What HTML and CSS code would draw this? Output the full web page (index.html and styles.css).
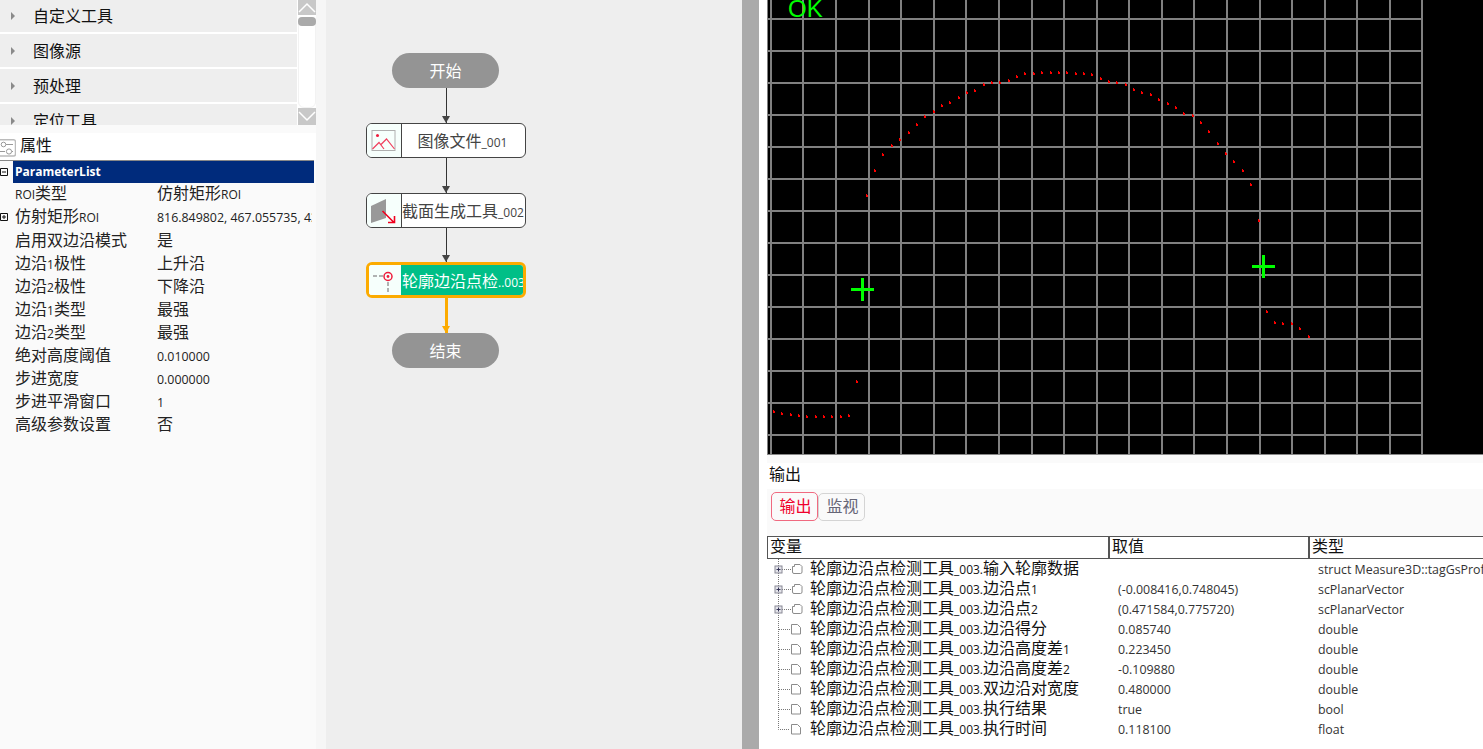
FILE: index.html
```html
<!DOCTYPE html>
<html lang="zh">
<head>
<meta charset="utf-8">
<title>轮廓边沿点检测工具</title>
<link rel="stylesheet" href="styles.css">
</head>
<body>
<svg class="defs" width="0" height="0" aria-hidden="true">
  <symbol id="t-branch" viewBox="0 0 43 20">
    <path d="M11.5 0V7M11.5 14V20M15 10.5H24" class="dots"/>
    <rect x="8" y="7" width="7" height="7" class="box"/>
    <path d="M9.5 10.5h4M11.5 8.5v4" class="plus"/>
    <path d="M25.500 7.500h2v-2h5.500l2 2v5.500q0 1.500-1.500 1.500h-6.500q-1.500 0-1.500-1.500z" class="ico"/>
  </symbol>
  <symbol id="t-leaf" viewBox="0 0 43 20">
    <path d="M11.500 0V20M12 10.500H23" class="dots"/>
    <path d="M24.500 5.500h6l3 3v6.500h-9z" class="ico"/>
  </symbol>
  <symbol id="t-last" viewBox="0 0 43 20">
    <path d="M11.500 0V10.500H23" class="dots"/>
    <path d="M24.500 5.500h6l3 3v6.500h-9z" class="ico"/>
  </symbol>
</svg>

<div class="app">
  <aside class="left">
    <div class="toolbox">
      <ul class="groups">
        <li class="group"><i class="caret"></i>自定义工具</li>
        <li class="group"><i class="caret"></i>图像源</li>
        <li class="group"><i class="caret"></i>预处理</li>
        <li class="group"><i class="caret"></i>定位工具</li>
      </ul>
      <div class="scrollbar">
        <div class="sb-btn"><svg width="18" height="15" viewBox="0 0 18 15"><path d="M1 12 9 4l8 8" class="chev"/></svg></div>
        <div class="sb-track"><div class="sb-thumb"></div></div>
        <div class="sb-btn"><svg width="18" height="17" viewBox="0 0 18 17"><path d="M1 4l8 8 8-8" class="chev"/></svg></div>
      </div>
    </div>
    <div class="strip"></div>
    <div class="prop-title">
      <svg class="prop-ico" width="16" height="18" viewBox="0 0 16 18">
        <path d="M-3 .8H13.500a2 2 0 0 1 2 2V15a2 2 0 0 1-2 2H-3" class="pi-box"/>
        <circle cx="3.500" cy="5.500" r="2.300" class="pi-l"/><path d="M6 5.500h7M0 12.500h5" class="pi-l"/>
        <circle cx="9" cy="12.500" r="2.600" class="pi-l"/><path d="M12 12.500h1" class="pi-l"/>
      </svg>
      <span class="prop-name">属性</span>
    </div>
    <div class="props">
      <div class="prop-head">
        <svg class="tog" width="8" height="8" viewBox="0 0 8 8"><path d="M.5.500h7v7h-7zM2 4h4"/></svg>
        <div class="prop-bar">ParameterList</div>
      </div>
      <div class="prop first"><span class="k"><span class="l">ROI</span>类型</span><span class="v">仿射矩形<span class="l">ROI</span></span></div>
      <div class="prop first"><svg class="tog" width="8" height="8" viewBox="0 0 8 8"><path d="M.5.500h7v7h-7zM2 4h4M4 2v4"/></svg><span class="k">仿射矩形<span class="l">ROI</span></span><span class="v"><span class="m">816.849802, 467.055735, 432.000000</span></span></div>
      <div class="prop"><span class="k">启用双边沿模式</span><span class="v">是</span></div>
      <div class="prop"><span class="k">边沿<span class="l">1</span>极性</span><span class="v">上升沿</span></div>
      <div class="prop"><span class="k">边沿<span class="l">2</span>极性</span><span class="v">下降沿</span></div>
      <div class="prop"><span class="k">边沿<span class="l">1</span>类型</span><span class="v">最强</span></div>
      <div class="prop"><span class="k">边沿<span class="l">2</span>类型</span><span class="v">最强</span></div>
      <div class="prop"><span class="k">绝对高度阈值</span><span class="v"><span class="m">0.010000</span></span></div>
      <div class="prop"><span class="k">步进宽度</span><span class="v"><span class="m">0.000000</span></span></div>
      <div class="prop"><span class="k">步进平滑窗口</span><span class="v"><span class="m">1</span></span></div>
      <div class="prop"><span class="k">高级参数设置</span><span class="v">否</span></div>
    </div>
  </aside>
  <div class="gutter"></div>

  <main class="flow">
    <div class="flow-col">
      <div class="pill">开始</div>
      <div class="conn"></div>
      <div class="node">
        <div class="node-ico">
          <svg width="34" height="33" viewBox="0 0 34 33">
            <rect x="5" y="6.500" width="23" height="20" fill="none" stroke="#b0b0b0"/>
            <circle cx="10.500" cy="11.500" r="1.500" fill="#ee1c3c"/>
            <path d="M5.500 25 12 18.500l5 6.500M13.500 21l6-6 8 10" fill="none" stroke="#f0405e" stroke-width="1.200"/>
          </svg>
        </div>
        <div class="node-txt">图像文件<span class="l">_001</span></div>
      </div>
      <div class="conn"></div>
      <div class="node">
        <div class="node-ico">
          <svg width="34" height="33" viewBox="0 0 34 33">
            <path d="M4 12 19 5v19L4 29z" fill="#999"/>
            <path d="M15.500 17 27 28.500M21 28.500h6.500V22" fill="none" stroke="#f0001e" stroke-width="1.600"/>
          </svg>
        </div>
        <div class="node-txt">截面生成工具<span class="l">_002</span></div>
      </div>
      <div class="conn short"></div>
      <div class="node active">
        <div class="node-ico">
          <svg width="32" height="30" viewBox="0 0 32 30">
            <path d="M4 11h10M19 17v11" fill="none" stroke="#999" stroke-width="1.500" stroke-dasharray="4 2"/>
            <circle cx="19" cy="11.500" r="4" fill="none" stroke="#ee1c3c" stroke-width="1.500"/>
            <circle cx="19" cy="11.500" r="1.400" fill="#ee1c3c"/>
          </svg>
        </div>
        <div class="node-txt">轮廓边沿点检<span class="l">..003</span></div>
      </div>
      <div class="conn hot"></div>
      <div class="pill">结束</div>
    </div>
  </main>
  <div class="splitter"></div>

  <section class="right">
    <div class="view">
      <svg class="canvas" width="716" height="454" viewBox="767 0 716 454">
        <path class="grid" d="M771 0V454M803 0V454M836 0V454M869 0V454M901 0V454M934 0V454M966 0V454M999 0V454M1032 0V454M1064 0V454M1097 0V454M1129 0V454M1162 0V454M1194 0V454M1227 0V454M1260 0V454M1292 0V454M1325 0V454M1357 0V454M1390 0V454M1422 0V454M768 19H1423M768 51H1423M768 83H1423M768 115H1423M768 147H1423M768 179H1423M768 211H1423M768 243H1423M768 275H1423M768 307H1423M768 339H1423M768 371H1423M768 403H1423M768 435H1423"/>
        <path class="edge" d="M767.500 0V454"/>
        <path class="pts" d="M866 194h1v1h1v2h-2zM874 169h1v1h1v2h-2zM882 153h1v1h1v2h-2zM891 144h1v1h1v2h-2zM899 138h1v1h1v2h-2zM908 131h1v1h1v2h-2zM916 123h1v1h1v2h-2zM924 115h1v1h1v2h-2zM933 110h1v1h1v2h-2zM941 104h1v1h1v2h-2zM949 101h1v1h1v2h-2zM958 96h1v1h1v2h-2zM966 91h1v1h1v2h-2zM974 89h1v1h1v2h-2zM983 83h1v1h1v2h-2zM991 81h1v1h1v2h-2zM999 81h1v1h1v2h-2zM1008 79h1v1h1v2h-2zM1016 75h1v1h1v2h-2zM1024 72h1v1h1v2h-2zM1033 72h1v1h1v2h-2zM1041 71h1v1h1v2h-2zM1050 71h1v1h1v2h-2zM1058 71h1v1h1v2h-2zM1066 71h1v1h1v2h-2zM1075 72h1v1h1v2h-2zM1083 72h1v1h1v2h-2zM1091 73h1v1h1v2h-2zM1100 77h1v1h1v2h-2zM1108 80h1v1h1v2h-2zM1116 81h1v1h1v2h-2zM1125 83h1v1h1v2h-2zM1133 88h1v1h1v2h-2zM1141 91h1v1h1v2h-2zM1150 93h1v1h1v2h-2zM1158 98h1v1h1v2h-2zM1167 102h1v1h1v2h-2zM1175 106h1v1h1v2h-2zM1183 112h1v1h1v2h-2zM1192 114h1v1h1v2h-2zM1200 121h1v1h1v2h-2zM1208 130h1v1h1v2h-2zM1217 142h1v1h1v2h-2zM1225 152h1v1h1v2h-2zM1233 160h1v1h1v2h-2zM1242 169h1v1h1v2h-2zM1250 183h1v1h1v2h-2zM1258 219h1v1h1v2h-2zM1266 310h1v1h1v2h-2zM1274 321h1v1h1v2h-2zM1282 322h1v1h1v2h-2zM1291 322h1v1h1v2h-2zM1299 327h1v1h1v2h-2zM1308 335h1v1h1v2h-2zM773 410h1v1h1v2h-2zM781 412h1v1h1v2h-2zM790 413h1v1h1v2h-2zM798 414h1v1h1v2h-2zM806 415h1v1h1v2h-2zM815 415h1v1h1v2h-2zM823 415h1v1h1v2h-2zM831 415h1v1h1v2h-2zM840 415h1v1h1v2h-2zM848 414h1v1h1v2h-2zM856 380h1v1h1v2h-2z"/>
        <path class="cross" d="M851 289.500H874M862.500 278V301M1252 266.500H1275M1263.500 255V278"/>
        <text class="ok" x="788" y="17">OK</text>
      </svg>
    </div>
    <div class="strip"></div>
    <div class="out-title">输出</div>
    <div class="tabs">
      <button class="tab on" type="button">输出</button>
      <button class="tab" type="button">监视</button>
    </div>
    <div class="thead">
      <div class="th c1">变量</div>
      <div class="th c2">取值</div>
      <div class="th c3">类型</div>
    </div>
    <div class="tbody">
      <div class="tr"><svg class="tw"><use href="#t-branch"/></svg><div class="td n">轮廓边沿点检测工具<span class="l">_003.</span>输入轮廓数据</div><div class="td w"></div><div class="td t">struct Measure3D::tagGsProfileData</div></div>
      <div class="tr"><svg class="tw"><use href="#t-branch"/></svg><div class="td n">轮廓边沿点检测工具<span class="l">_003.</span>边沿点<span class="l">1</span></div><div class="td w">(-0.008416,0.748045)</div><div class="td t">scPlanarVector</div></div>
      <div class="tr"><svg class="tw"><use href="#t-branch"/></svg><div class="td n">轮廓边沿点检测工具<span class="l">_003.</span>边沿点<span class="l">2</span></div><div class="td w">(0.471584,0.775720)</div><div class="td t">scPlanarVector</div></div>
      <div class="tr"><svg class="tw"><use href="#t-leaf"/></svg><div class="td n">轮廓边沿点检测工具<span class="l">_003.</span>边沿得分</div><div class="td w">0.085740</div><div class="td t">double</div></div>
      <div class="tr"><svg class="tw"><use href="#t-leaf"/></svg><div class="td n">轮廓边沿点检测工具<span class="l">_003.</span>边沿高度差<span class="l">1</span></div><div class="td w">0.223450</div><div class="td t">double</div></div>
      <div class="tr"><svg class="tw"><use href="#t-leaf"/></svg><div class="td n">轮廓边沿点检测工具<span class="l">_003.</span>边沿高度差<span class="l">2</span></div><div class="td w">-0.109880</div><div class="td t">double</div></div>
      <div class="tr"><svg class="tw"><use href="#t-leaf"/></svg><div class="td n">轮廓边沿点检测工具<span class="l">_003.</span>双边沿对宽度</div><div class="td w">0.480000</div><div class="td t">double</div></div>
      <div class="tr"><svg class="tw"><use href="#t-leaf"/></svg><div class="td n">轮廓边沿点检测工具<span class="l">_003.</span>执行结果</div><div class="td w">true</div><div class="td t">bool</div></div>
      <div class="tr"><svg class="tw"><use href="#t-last"/></svg><div class="td n">轮廓边沿点检测工具<span class="l">_003.</span>执行时间</div><div class="td w">0.118100</div><div class="td t">float</div></div>
    </div>
  </section>
</div>
</body>
</html>
```

FILE: styles.css
```css
* { box-sizing: border-box; }
html, body { margin: 0; height: 100%; overflow: hidden; background: #fff; }
body { font: 16px/20px "Open Sans", "Noto Sans CJK SC", sans-serif; color: #1a1a1a; }
.defs { position: absolute; }
.l { font-size: 12px; }
.m { font-size: 12.4px; }

.app { display: flex; height: 749px; width: 1483px; }

/* left column */
.left { width: 316px; flex: none; display: flex; flex-direction: column; background: #fafafa; }
.toolbox { height: 125px; display: flex; overflow: hidden; background: #fff; }
.groups { list-style: none; margin: -1px 0 0; padding: 0; width: 297px; flex: none; }
.group { height: 33px; margin-bottom: 2px; background: #eee; display: flex; align-items: center; padding: 1px 0 0 11px; color: #111; flex: none; }
.caret { width: 0; height: 0; margin-top: -1px; border-left: 4px solid #8a8a8a; border-top: 4px solid transparent; border-bottom: 4px solid transparent; margin-right: 18px; }
.scrollbar { width: 18px; margin-left: 1px; display: flex; flex-direction: column; }
.sb-btn { background: #c8c8c8; display: flex; }
.sb-track { flex: 1; margin: 2px 0 0; position: relative; border: 1px solid #f2f2f2; border-radius: 6px; }
.sb-thumb { height: 9px; margin: -1px; background: #aaa; border-radius: 4px; }
.chev { fill: none; stroke: #fff; stroke-width: 1.500; }
.strip { height: 8px; background: #fafafa; flex: none; }
.prop-title { height: 27px; background: #fff; display: flex; align-items: center; gap: 4px; flex: none; color: #111; }
.prop-name { margin-top: -4px; }
.prop-ico { flex: none; overflow: hidden; margin-top: 3px; }
.pi-box { fill: none; stroke: #bbb; stroke-width: 1.500; }
.pi-l { fill: none; stroke: #999; stroke-width: 1; }
.props { border-top: 1px solid #888; flex: 1; width: 314px; overflow: hidden; }
.prop-head { height: 22px; display: flex; align-items: center; }
.prop-bar { margin-left: 5px; flex: 1; height: 22px; background: #002b7c; color: #fff; font-size: 12px; font-weight: 700; line-height: 21px; padding-left: 2px; }
.tog { flex: none; display: block; fill: none; stroke: #111; stroke-width: 1; }
.prop { height: 23px; line-height: 23px; display: flex; align-items: flex-start; white-space: nowrap; color: #222; padding-left: 15px; position: relative; }
.prop.first { line-height: 21px; }
.prop .tog { position: absolute; left: 0; top: 7px; }
.k { width: 142px; flex: none; }
.v { width: 155px; flex: none; overflow: hidden; }
.gutter { width: 10px; flex: none; background: #f6f6f6; }

/* flow canvas */
.flow { width: 416px; flex: none; background: #eee; padding: 53px 0 0 40px; }
.flow-col { width: 160px; display: flex; flex-direction: column; align-items: center; }
.pill { width: 107px; height: 35px; margin-right: 1px; border-radius: 18px; background: #949494; color: #fff; text-align: center; line-height: 37px; }
.node { width: 160px; height: 35px; border: 1px solid #444; border-radius: 6px; display: flex; overflow: hidden; background: #fff; }
.node-ico { width: 35px; flex: none; background: #f6fffc; border-right: 1px solid #444; display: flex; }
.node-txt { flex: 1; text-align: center; line-height: 35px; padding-right: 2px; color: #444; white-space: nowrap; }
.node.active { height: 36px; border: 3px solid #fcab00; }
.node.active .node-ico { width: 32px; border-right: 0; }
.node.active .node-txt { background: #00bf87; color: #fff; line-height: 32px; padding: 0 0 0 1px; }
.conn { width: 1px; height: 35px; background: #333; position: relative; }
.conn.short { height: 34px; }
.conn::after { content: ""; position: absolute; left: -4px; bottom: 0; border-top: 7px solid #444; border-left: 4px solid transparent; border-right: 4px solid transparent; }
.conn.hot { width: 3px; background: #fcab00; }
.conn.hot::after { left: -3px; border-top-color: #fcab00; }
.splitter { width: 17px; flex: none; background: #aaa; }

/* right column */
.right { flex: 1; min-width: 0; padding-left: 8px; background: #fff; display: flex; flex-direction: column; overflow: hidden; }
.view { height: 455px; flex: none; border-bottom: 1px solid #888; background: #000; }
.canvas { display: block; }
.grid { fill: none; stroke: #808080; stroke-width: 2; shape-rendering: crispEdges; }
.edge { fill: none; stroke: #808080; stroke-width: 1; shape-rendering: crispEdges; }
.pts { fill: #f00; shape-rendering: crispEdges; }
.cross { fill: none; stroke: #0f0; stroke-width: 3; shape-rendering: crispEdges; }
.ok { font: 24px "Liberation Sans", sans-serif; fill: #0f0; }
.right .strip { height: 8px; }
.out-title { height: 26px; line-height: 22px; padding-left: 2px; color: #111; flex: none; }
.tabs { height: 47px; background: #fafafa; padding: 3px 0 0 4px; display: flex; align-items: flex-start; flex: none; }
.tab { width: 47px; height: 28px; margin-top: 1px; padding: 0 0 2px 2px; font: inherit; line-height: 24px; background: #fafafa; color: #667; border: 1px solid #d4d4d4; border-radius: 5px; }
.tab.on { height: 29px; margin-top: 0; color: #f0002c; border-color: #f06a80; }
.thead { height: 23px; display: flex; border-top: 1px solid #555; border-bottom: 1px solid #555; background: #fff; flex: none; color: #111; }
.th { line-height: 18px; padding-left: 2px; border-left: 2px solid #555; }
.th:first-child { border-left-width: 1px; }
.c1 { width: 341px; }
.c2 { width: 200px; }
.c3 { flex: 1; }
.tbody { flex: 1; }
.tr { height: 20px; display: flex; align-items: center; white-space: nowrap; color: #111; }
.tw { width: 43px; height: 20px; flex: none; }
.dots { fill: none; stroke: #777; stroke-width: 1; stroke-dasharray: 1 1; }
.box { fill: #e4e4ea; stroke: #8a8a96; stroke-width: 1; }
.plus { fill: none; stroke: #335; stroke-width: 1; }
.ico { fill: #fff; stroke: #8c8c8c; stroke-width: 1; }
.n { width: 299px; flex: none; }
.w { width: 200px; flex: none; padding: 2px 0 0 9px; color: #333; font-size: 12.4px; }
.t { padding: 2px 0 0 9px; color: #333; font-size: 12.4px; }
```
